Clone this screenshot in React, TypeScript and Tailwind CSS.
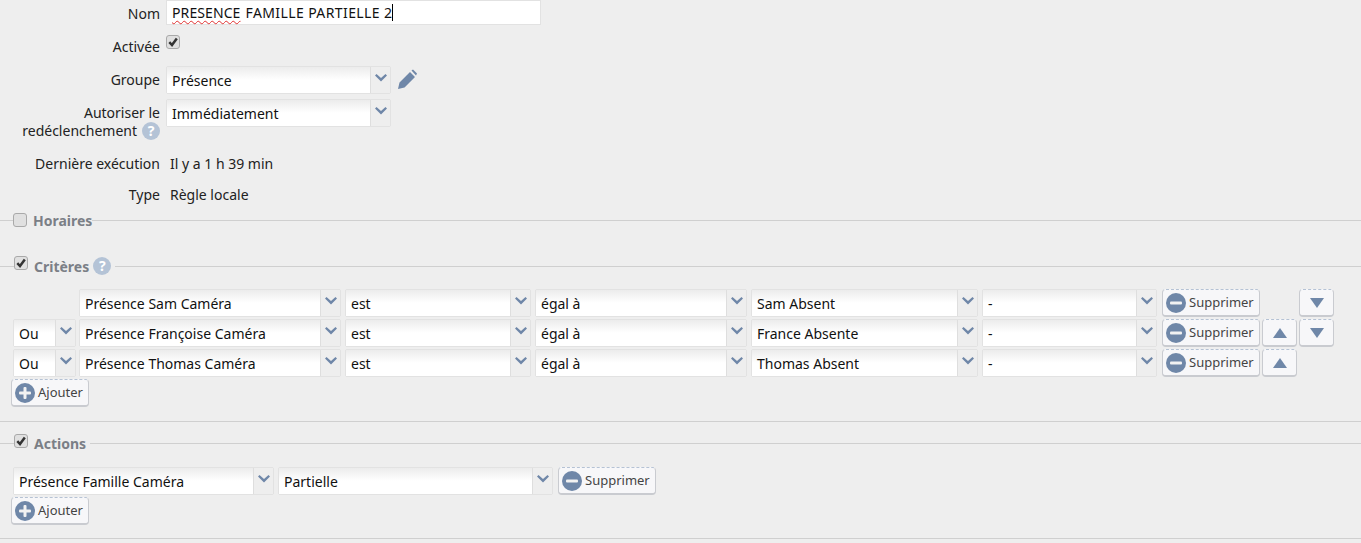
import type { ReactNode } from 'react';

const LINE = 'h-px bg-[#cfcfcf]';

function Chevron() {
  return (
    <svg width="12" height="8" viewBox="0 0 12 8" className="mt-[-4px]">
      <path d="M0 1.5 L1.5 0 L6 4 L10.5 0 L12 1.5 L6 7.5 Z" fill="#6f87a8" />
    </svg>
  );
}

function Select({ value, width }: { value: string; width: string }) {
  return (
    <div className={`flex h-[28px] shrink-0 rounded-[2px] border border-[#e2e2e2] ${width}`}>
      <div className="flex min-w-0 flex-1 items-center bg-gradient-to-b from-[#ececec] via-white to-white pl-[5px] text-[#111] whitespace-nowrap">
        {value}
      </div>
      <div className="flex w-[20px] items-center justify-center border-l border-[#dedede] bg-[#eeeeee]">
        <Chevron />
      </div>
    </div>
  );
}

function Checkbox({ checked = false, className = '' }: { checked?: boolean; className?: string }) {
  return (
    <span className={`flex h-[14px] w-[14px] shrink-0 items-center justify-center rounded-[3px] border border-[#a9a9a9] bg-[#e0e0e0] ${className}`}>
      {checked && (
        <svg width="10" height="10" viewBox="0 0 10 10">
          <path d="M1.3 5.2 L4 8 L8.8 1.5" fill="none" stroke="#333" strokeWidth="2.5" />
        </svg>
      )}
    </span>
  );
}

function Help({ className = '' }: { className?: string }) {
  return (
    <span className={`inline-flex h-[18px] w-[18px] shrink-0 items-center justify-center rounded-full bg-[#b4c3d6] text-[14px] font-bold leading-none text-white ${className}`}>
      ?
    </span>
  );
}

function RoundIcon({ plus = false }: { plus?: boolean }) {
  return (
    <svg width="20" height="20" viewBox="0 0 20 20" className="shrink-0">
      <circle cx="10" cy="10" r="10" fill="#6f87a8" />
      <rect x="4" y="8.5" width="12" height="3" rx="1" fill="#f2f2f2" />
      {plus && <rect x="8.5" y="4" width="3" height="12" rx="1" fill="#f2f2f2" />}
    </svg>
  );
}

const BTN =
  'flex h-[28px] shrink-0 items-center rounded-[4px] border border-[#c9cbd0] border-b-2 [border-top-style:dashed] border-t-[#b5c2d4] bg-[#f7f7f9] pt-[1px] text-[#444]';

function IconButton({ plus = false, label, width }: { plus?: boolean; label: string; width: string }) {
  return (
    <button className={`${BTN} gap-[3px] pl-[3px] text-[13px] ${width}`}>
      <RoundIcon plus={plus} />
      {label}
    </button>
  );
}

function Move({ up = false }: { up?: boolean }) {
  return (
    <button className={`${BTN} w-[35px] justify-center`}>
      <svg width="14" height="10" viewBox="0 0 14 10">
        <path d={up ? 'M7 0 L14 10 L0 10 Z' : 'M0 0 L14 0 L7 10 Z'} fill="#6f87a8" />
      </svg>
    </button>
  );
}

function Section({ left, children, className = '' }: { left: string; children: ReactNode; className?: string }) {
  return (
    <div className={`flex items-center ${className}`}>
      <div className={`${LINE} ${left}`} />
      {children}
      <div className={`${LINE} flex-1`} />
    </div>
  );
}

function Title({ children }: { children: ReactNode }) {
  return <span className="ml-[6px] text-[14px] font-bold text-[#7b7f86]">{children}</span>;
}

function Row({ label, className = '', children }: { label: ReactNode; className?: string; children: ReactNode }) {
  return (
    <div className={`flex ${className}`}>
      <div className="w-[160px] shrink-0 text-right">{label}</div>
      <div className="ml-[6px] min-w-0 flex-1">{children}</div>
    </div>
  );
}

const criteria = [
  { name: 'Présence Sam Caméra', value: 'Sam Absent', or: false, up: false, down: true },
  { name: 'Présence Françoise Caméra', value: 'France Absente', or: true, up: true, down: true },
  { name: 'Présence Thomas Caméra', value: 'Thomas Absent', or: true, up: true, down: false },
];

export default function App() {
  return (
    <div className="h-[543px] overflow-hidden bg-[#eeeeee] text-[14px] text-[#222] font-['Noto_Sans',sans-serif]">
      <Row label={<span className="leading-[27px]">Nom</span>}>
        <div className="flex h-[25px] w-[375px] items-center border border-[#e2e2e2] bg-white pl-[5px] text-[#111]">
          <span className="tracking-[0.1px] underline decoration-wavy decoration-[#e03030] decoration-1 underline-offset-2">PRESENCE</span>
          <span className="ml-[5px] tracking-[0.4px]">FAMILLE PARTIELLE 2</span>
          <span className="h-[17px] w-px bg-black" />
        </div>
      </Row>
      <Row label={<span className="leading-[24px]">Activée</span>} className="mt-[8px] h-[31px]">
        <Checkbox checked />
      </Row>
      <Row label={<span className="leading-[28px]">Groupe</span>}>
        <div className="flex items-center">
          <Select value="Présence" width="w-[225px]" />
          <svg width="22" height="22" viewBox="0 0 22 22" className="ml-[5px]">
            <path d="M2 20 L3.5 13.5 L14 3 L19 8 L8.5 18.5 Z M15.5 1.5 L17 0.5 L21 4.5 L20 6.5 Z" fill="#6f87a8" />
          </svg>
        </div>
      </Row>
      <Row
        label={
          <div className="leading-[18px]">
            Autoriser le
            <div className="flex items-center justify-end">
              redéclenchement
              <Help className="ml-[5px]" />
            </div>
          </div>
        }
        className="mt-[5px] h-[47px] pt-[5px]"
      >
        <div className="-mt-[5px]">
          <Select value="Immédiatement" width="w-[225px]" />
        </div>
      </Row>
      <Row label="Dernière exécution" className="mt-[6px] h-[31px] leading-[24px]">
        <span className="ml-[4px] block">Il y a 1 h 39 min</span>
      </Row>
      <Row label="Type" className="h-[20px] leading-[24px]">
        <span className="ml-[4px] block">Règle locale</span>
      </Row>

      <Section left="w-[13px]" className="mt-[9px] h-[16px]">
        <Checkbox />
        <Title>Horaires</Title>
      </Section>

      <Section left="w-[14px]" className="mt-[28px] h-[20px]">
        <Checkbox checked className="-mt-[6px]" />
        <Title>Critères</Title>
        <Help className="ml-[4px] mr-[4px]" />
      </Section>

      <div className="mt-[13px] flex flex-col gap-[2px]">
        {criteria.map((c) => (
          <div key={c.name} className="flex items-center">
            <div className="ml-[13px] w-[64px] shrink-0">
              {c.or && <Select value="Ou" width="w-[63px]" />}
            </div>
            <div className="ml-[2px] flex gap-[4px]">
              <Select value={c.name} width="w-[262px]" />
              <Select value="est" width="w-[186px]" />
              <Select value="égal à" width="w-[212px]" />
              <Select value={c.value} width="w-[227px]" />
              <Select value="-" width="w-[175px]" />
            </div>
            <div className="ml-[5px]">
              <IconButton label="Supprimer" width="w-[98px]" />
            </div>
            <div className="ml-[2px] w-[35px]">{c.up && <Move up />}</div>
            <div className="ml-[2px] w-[35px]">{c.down && <Move />}</div>
          </div>
        ))}
      </div>
      <div className="ml-[11px] mt-[2px]">
        <IconButton plus label="Ajouter" width="w-[78px]" />
      </div>

      <div className={`${LINE} mt-[14px]`} />

      <Section left="w-[14px]" className="mt-[13px] h-[16px]">
        <Checkbox checked className="-mt-[4px]" />
        <Title>Actions</Title>
        <span className="w-[4px]" />
      </Section>

      <div className="ml-[13px] mt-[16px] flex gap-[4px]">
        <Select value="Présence Famille Caméra" width="w-[261px]" />
        <Select value="Partielle" width="w-[275px]" />
        <div className="ml-[1px]">
          <IconButton label="Supprimer" width="w-[98px]" />
        </div>
      </div>
      <div className="ml-[11px] mt-[2px]">
        <IconButton plus label="Ajouter" width="w-[78px]" />
      </div>
      <div className={`${LINE} mt-[13px]`} />
    </div>
  );
}
